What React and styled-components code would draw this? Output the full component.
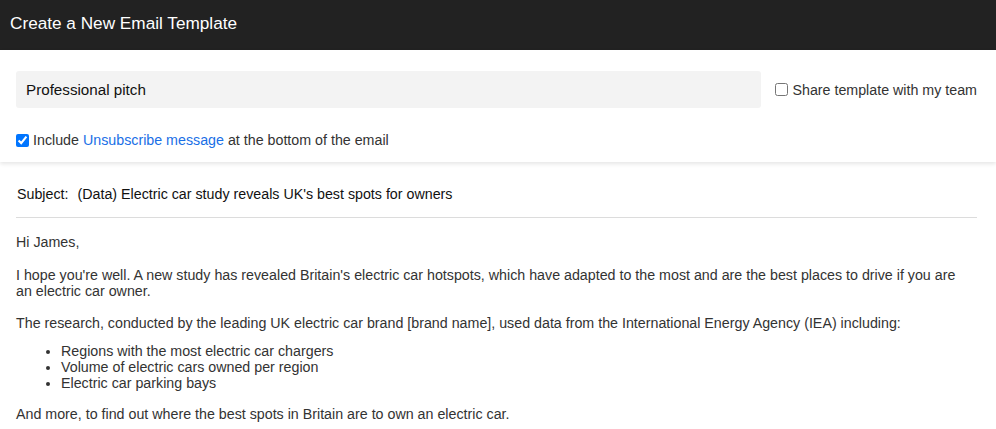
import React from "react";
import styled, { createGlobalStyle } from "styled-components";

const Global = createGlobalStyle`
  html, body { margin: 0; padding: 0; background: #fff; }
  body { font-family: "Liberation Sans", Arial, Helvetica, sans-serif; color: #222; }
  * { box-sizing: border-box; }
`;

const Header = styled.header`
  height: 50px;
  background: #222;
  color: #fff;
  display: flex;
  align-items: center;
  padding: 0 10px 4px;
  font-size: 17.2px;
`;

const Panel = styled.section`
  padding: 21px 19px 14px 16px;
  box-shadow: 0 2px 4px rgba(0, 0, 0, 0.1);
  position: relative;
`;

const TopRow = styled.div`
  display: flex;
  align-items: center;
  gap: 14px;
`;

const NameInput = styled.input`
  flex: 1;
  height: 37px;
  border: none;
  border-radius: 3px;
  background: #f3f3f3;
  padding: 0 10px;
  font-family: inherit;
  font-size: 15.2px;
  color: #111;
  outline: none;
`;

const CheckLabel = styled.label`
  display: flex;
  align-items: center;
  font-size: 14.25px;
  color: #333;
  white-space: nowrap;
  margin-top: ${(p) => p.$mt || 0}px;
`;

const Box = styled.input`
  margin: 0 4px 0 0;
  width: 13px;
  height: 13px;
`;

const Link = styled.a`
  color: #1a6fe6;
  text-decoration: none;
  margin: 0 4px;
`;

const Editor = styled.section`
  padding: 24px 19px 0 16px;
`;

const SubjectRow = styled.div`
  display: flex;
  gap: 9px;
  font-size: 14.25px;
  color: #111;
  padding: 0 1px 15px;
  border-bottom: 1px solid #dcdcdc;
`;

const Body = styled.div`
  padding: 16px 6px 0 0;
  font-size: 14.25px;
  line-height: 16px;
  color: #333;
`;

const P = styled.p`
  margin: 0 0 ${(p) => p.$mb ?? 16}px;
`;

const List = styled.ul`
  margin: 0 0 15px;
  padding-left: 45px;
`;

export default function App() {
  return (
    <>
      <Global />
      <Header>Create a New Email Template</Header>
      <Panel>
        <TopRow>
          <NameInput defaultValue="Professional pitch" />
          <CheckLabel>
            <Box type="checkbox" />
            Share template with my team
          </CheckLabel>
        </TopRow>
        <CheckLabel $mt={24}>
          <Box type="checkbox" defaultChecked />
          Include<Link href="#">Unsubscribe message</Link>at the bottom of the email
        </CheckLabel>
      </Panel>
      <Editor>
        <SubjectRow>
          <span>Subject:</span>
          <span>(Data) Electric car study reveals UK's best spots for owners</span>
        </SubjectRow>
        <Body>
          <P $mb={17}>Hi James,</P>
          <P>
            I hope you're well. A new study has revealed Britain's electric car hotspots, which have adapted to the most and are the best places to drive if you are an electric car owner.
          </P>
          <P $mb={12}>
            The research, conducted by the leading UK electric car brand [brand name], used data from the International Energy Agency (IEA) including:
          </P>
          <List>
            <li>Regions with the most electric car chargers</li>
            <li>Volume of electric cars owned per region</li>
            <li>Electric car parking bays</li>
          </List>
          <P>And more, to find out where the best spots in Britain are to own an electric car.</P>
        </Body>
      </Editor>
    </>
  );
}
